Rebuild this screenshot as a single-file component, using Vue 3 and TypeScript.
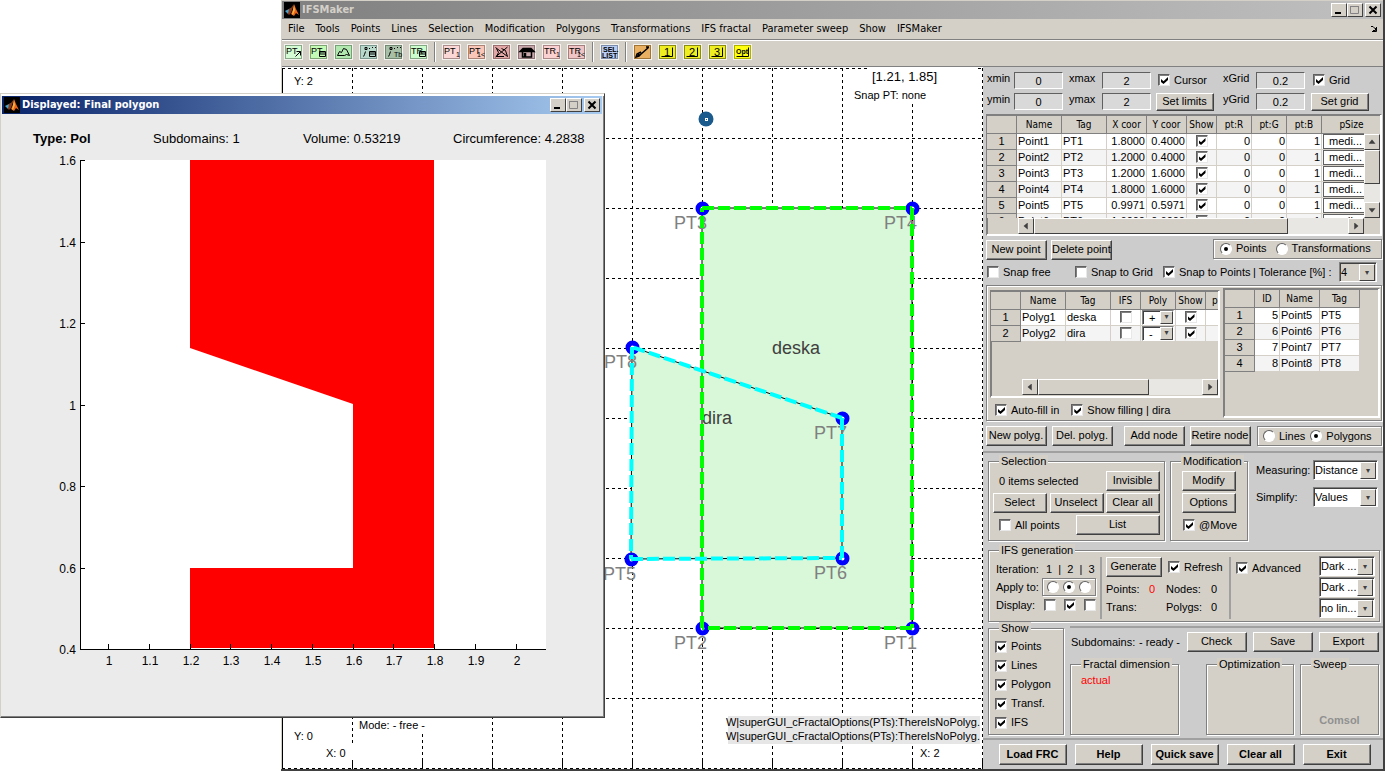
<script setup lang="ts">
import { ref } from 'vue'

interface Pt { id: number; name: string; tag: string; x: number; y: number }

const menus = ['File', 'Tools', 'Points', 'Lines', 'Selection', 'Modification', 'Polygons',
  'Transformations', 'IFS fractal', 'Parameter sweep', 'Show', 'IFSMaker']

interface Tool { id: string; title: string; bg: string; edge: string; text?: string; sub?: string; gapBefore?: boolean }
const tools: Tool[] = [
  { id: 'pt-arrow', title: 'Add point', bg: '#d5fbd5', edge: '#8aa88a', text: 'PT' },
  { id: 'pt-table', title: 'Point table', bg: '#c4fbb4', edge: '#7fa574', text: 'PT' },
  { id: 'shape', title: 'Polygon', bg: '#b0e8b0', edge: '#76a076' },
  { id: 'nodes', title: 'Node table', bg: '#b8d8cc', edge: '#7c988e' },
  { id: 'nodes-tb', title: 'Node list', bg: '#a6bfa6', edge: '#728872', sub: 'Tb' },
  { id: 'tr-table', title: 'Transformation table', bg: '#ccfccc', edge: '#84a884', text: 'TR' },
  { id: 'pt-1', title: 'Point 1', bg: '#fbd8d6', edge: '#ac8e8c', text: 'PT', sub: '1', gapBefore: true },
  { id: 'pt-1x', title: 'Point cut', bg: '#f9c6b8', edge: '#ac8478', text: 'PT', sub: '1<' },
  { id: 'shape-x', title: 'Delete polygon', bg: '#e2a6a6', edge: '#9a6e6e' },
  { id: 'house', title: 'House', bg: '#c8a8aa', edge: '#8c7274' },
  { id: 'tr-1', title: 'Transformation 1', bg: '#fbd0d0', edge: '#ac8888', text: 'TR', sub: '1' },
  { id: 'tr-1x', title: 'Transformation cut', bg: '#f0c4c4', edge: '#a48080', text: 'TR', sub: '1<' },
  { id: 'sel', title: 'Selection list', bg: '#b8ccf4', edge: '#7c8cac', gapBefore: true },
  { id: 'brush', title: 'Brush', bg: '#e8b060', edge: '#a07434', gapBefore: true },
  { id: 'n1', title: 'Set 1', bg: '#eeee20', edge: '#8c8c14', text: '1' },
  { id: 'n2', title: 'Set 2', bg: '#eeee20', edge: '#8c8c14', text: '2' },
  { id: 'n3', title: 'Set 3', bg: '#eeee20', edge: '#8c8c14', text: '3' },
  { id: 'opt', title: 'Options', bg: '#ffff10', edge: '#b0b000', text: 'Opt' },
]
const isNum = (t: Tool) => /^n\d$/.test(t.id)

const points: Pt[] = [
  { id: 1, name: 'Point1', tag: 'PT1', x: 1.8, y: 0.4 },
  { id: 2, name: 'Point2', tag: 'PT2', x: 1.2, y: 0.4 },
  { id: 3, name: 'Point3', tag: 'PT3', x: 1.2, y: 1.6 },
  { id: 4, name: 'Point4', tag: 'PT4', x: 1.8, y: 1.6 },
  { id: 5, name: 'Point5', tag: 'PT5', x: 0.9971, y: 0.5971 },
  { id: 6, name: 'Point6', tag: 'PT6', x: 1.6, y: 0.6 },
  { id: 7, name: 'Point7', tag: 'PT7', x: 1.6, y: 1.0 },
  { id: 8, name: 'Point8', tag: 'PT8', x: 1.0, y: 1.2029 },
]
const tableRows = points.slice(0, 6)
const nodeRows = points.slice(4)
const polygons = [
  { id: 1, name: 'Polyg1', tag: 'deska', sign: '+' },
  { id: 2, name: 'Polyg2', tag: 'dira', sign: '-' },
]

const SCALE = 350
const sx = (v: number) => Math.round(v * SCALE)
const sy = (v: number) => Math.round((2 - v) * SCALE)
const gridLines = Array.from({ length: 11 }, (_, i) => i * 70)
const edgePath = (ids: number[]) => ids.map((id) => {
  const p = points[id - 1]
  return `${sx(p.x)},${sy(p.y)}`
}).join(' ')
const deska = edgePath([1, 2, 3, 4])
const dira = edgePath([5, 6, 7, 8])
const segments = (ids: number[]) => ids.map((id, i) => {
  const a = points[id - 1]
  const b = points[ids[(i + 1) % ids.length] - 1]
  return { x1: sx(a.x), y1: sy(a.y), x2: sx(b.x), y2: sy(b.y) }
})
const deskaSegs = segments([1, 2, 3, 4])
const diraSegs = segments([5, 6, 7, 8])

const xTicks = Array.from({ length: 11 }, (_, i) => ({ label: String((10 + i) / 10), x: Math.round(28 + i * 40.75) }))
const yTicks = Array.from({ length: 7 }, (_, i) => ({ label: String((16 - 2 * i) / 10), y: Math.round(i * 81.5) }))

const showItems = ['Points', 'Lines', 'Polygon', 'Transf.', 'IFS']
const footer = ['Load FRC', 'Help', 'Quick save', 'Clear all', 'Exit']
const lineStyles = ['Dark ...', 'Dark ...', 'no lin...']
const mode = ref('Points')
const kind = ref('Polygons')
const apply = ref(2)
</script>

<template>
  <div class="desktop">
    <main class="window main-window">
      <header class="titlebar inactive">
        <svg class="logo" viewBox="0 0 16 16"><rect width="16" height="16" fill="#000" /><path d="M1 9l4-2 3-1-3 5-1 1z" fill="#4aa3c8" /><path d="M5 7l2-1 3-4-3 9-2 2-1-1z" fill="#8a3a1c" /><path d="M10 2l2 5 3 6-3-2-2 3-3-2 2-4z" fill="#e8641c" /><path d="M10 3l1 5-2 5-1-1z" fill="#f8b040" /></svg>
        <h1>IFSMaker</h1>
        <div class="win-buttons">
          <button aria-label="Minimize"><svg viewBox="0 0 14 12"><path d="M3 8h6v2h-6z" /></svg></button>
          <button aria-label="Maximize"><svg viewBox="0 0 14 12"><path d="M2.500 2.500h8v7h-8z" fill="none" stroke="#848284" /><path d="M2 2.500h9" stroke="#848284" /></svg></button>
          <button class="close" aria-label="Close"><svg viewBox="0 0 14 12"><path d="M3.500 2.500l7 7M10.500 2.500l-7 7" stroke="#000" stroke-width="2" /></svg></button>
        </div>
      </header>
      <nav class="menubar">
        <button v-for="m in menus" :key="m">{{ m }}</button>
        <svg class="dock" viewBox="0 0 8 8"><path d="M1 1.500h2l3 3M6.500 2v4.500h-4.500M5.500 3v2.500h-2.500" fill="none" stroke="#000" /></svg>
      </nav>
      <div class="toolbar">
        <button v-for="t in tools" :key="t.id" :class="{ divided: t.gapBefore }" :title="t.title">
          <svg viewBox="0 0 19 16">
            <rect x="0.500" y="0.500" width="18" height="15" :fill="t.bg" stroke="#f4f2ec" />
            <rect x="1.500" y="1.500" width="16" height="13" fill="none" :stroke="t.edge" />
            <text v-if="isNum(t)" x="6" y="12" class="num">{{ t.text }}</text>
            <text v-else-if="t.id === 'opt'" x="3" y="10" class="tiny">{{ t.text }}</text>
            <text v-else-if="t.text" x="2" y="10">{{ t.text }}</text>
            <text v-if="t.sub" :x="t.sub === '1' ? 14 : 10" y="13" class="sub-text">{{ t.sub }}</text>
            <g class="ink">
              <path v-if="t.id === 'pt-arrow'" d="M11.500 12.500l5-5M12.500 7.500h4v4" />
              <path v-if="t.id === 'pt-table' || t.id === 'tr-table' || t.id === 'nodes'" d="M10.500 7.500h6v5h-6zM10.500 10h6M11 8h5" />
              <path v-if="t.id === 'shape'" d="M3.500 11.500l2-4 2 1 2-4 3 1 3 6-3-1-2 1z" />
              <path v-if="t.id === 'nodes' || t.id === 'nodes-tb'" d="M4.500 12.500l1-2 1-3M6 5.500h2v-2h-2zM10 4.500h1M13 3.500h1M16 3.500h1" />
              <path v-if="t.id === 'shape-x'" d="M4.500 12.500l2-4-2-4M3.500 3.500l12 9M15.500 3l-12 10M9.500 4.500l4 2 2 6M4 12.500h8" />
              <path v-if="t.id === 'house'" d="M3 7.500l3-3h8l3 3zM5 6h10M5.500 8v5h9v-5M7.500 9v3h1v-3" stroke-width="1.500" />
              <path v-if="t.id === 'brush'" d="M15.500 3.500l-8 7M13 3l3 0M8 8l-4 2-1 3 3-1 3-3M5 12l1-2" stroke-width="1.500" />
              <path v-if="isNum(t)" d="M3.500 12.500h11v-9" />
              <path v-if="t.id === 'opt'" d="M3.500 12.500h12v-9" />
            </g>
            <template v-if="t.id === 'sel'">
              <text x="3" y="8" class="tiny">SEL.</text><text x="2" y="14" class="tiny">LIST</text>
            </template>
          </svg>
        </button>
      </div>

      <div class="body">
        <section class="canvas">
          <svg viewBox="0 -1 701 702" class="plot">
            <g class="grid">
              <line v-for="g in gridLines" :key="'v' + g" :x1="g + 0.5" :x2="g + 0.5" y1="0" y2="693" />
              <line v-for="g in gridLines" :key="'h' + g" :y1="g + 0.5" :y2="g + 0.5" x1="0" x2="700" />
            </g>
            <g class="axis">
              <line x1="0.5" x2="0.5" y1="0" y2="701" />
              <line v-for="g in gridLines" :key="'t' + g" :x1="g + 0.5" :x2="g + 0.5" y1="693" y2="701" />
            </g>
            <rect x="588" y="-1" width="106" height="18" fill="#fff" />
            <rect x="571" y="18" width="90" height="16" fill="#fff" />
            <rect x="40" y="677" width="40" height="15" fill="#fff" />
            <rect x="76" y="649" width="70" height="15" fill="#fff" />
            <polygon :points="deska" class="fill" />
            <polygon :points="dira" class="fill" />
            <g class="thin"><polygon :points="deska" /><polygon :points="dira" /></g>
            <g class="ring"><circle v-for="p in points" :key="p.id" :cx="sx(p.x) + 0.5" :cy="sy(p.y) + 0.5" r="4.500" /></g>
            <g class="labels"><text v-for="p in points" :key="p.id" :x="sx(p.x) - 28" :y="sy(p.y) + 21">{{ p.tag }}</text></g>
            <g class="area"><text x="490" y="286">deska</text><text x="420" y="356">dira</text></g>
            <g class="seg green"><line v-for="(s, i) in deskaSegs" :key="i" v-bind="s" /></g>
            <g class="seg cyan"><line v-for="(s, i) in diraSegs" :key="i" v-bind="s" /></g>
            <circle cx="424" cy="51" r="7.500" fill="#1a5a8c" />
            <rect x="423" y="50" width="3" height="3" fill="#fff" /><rect x="424" y="51" width="1" height="1" fill="#1a5a8c" />
            <g class="notes">
              <text x="12" y="17">Y: 2</text>
              <text x="12" y="672">Y: 0</text>
              <text x="44" y="689">X: 0</text>
              <text x="638" y="689">X: 2</text>
              <text x="77" y="661">Mode: - free -</text>
              <text x="590" y="13" class="coords">[1.21, 1.85]</text>
              <text x="572" y="31">Snap PT: none</text>
              <rect x="446" y="648" width="252" height="28" fill="#e6e6e6" />
              <text x="698" y="658" text-anchor="end">W|superGUI_cFractalOptions(PTs):ThereIsNoPolyg.</text>
              <text x="698" y="672" text-anchor="end">W|superGUI_cFractalOptions(PTs):ThereIsNoPolyg.</text>
            </g>
          </svg>
        </section>

        <aside class="panel">
          <div class="limits">
            <label for="xmin">xmin</label><input id="xmin" class="num-box" value="0">
            <label for="xmax">xmax</label><input id="xmax" class="num-box" value="2">
            <label class="check"><input type="checkbox" checked>Cursor</label>
            <label for="xgrid">xGrid</label><input id="xgrid" class="num-box" value="0.2">
            <label class="check"><input type="checkbox" checked>Grid</label>
            <label for="ymin">ymin</label><input id="ymin" class="num-box" value="0">
            <label for="ymax">ymax</label><input id="ymax" class="num-box" value="2">
            <button class="btn">Set limits</button>
            <label for="ygrid">yGrid</label><input id="ygrid" class="num-box" value="0.2">
            <button class="btn">Set grid</button>
          </div>

          <div class="sheet points-sheet">
            <div class="viewport">
              <table>
                <colgroup><col class="w30"><col class="w45"><col class="w45"><col class="w40"><col class="w40"><col class="w30"><col class="w35"><col class="w35"><col class="w35"><col class="w60"></colgroup>
                <thead><tr><th /><th>Name</th><th>Tag</th><th>X coor</th><th>Y coor</th><th>Show</th><th>pt:R</th><th>pt:G</th><th>pt:B</th><th>pSize</th></tr></thead>
                <tbody>
                  <tr v-for="p in tableRows" :key="p.id">
                    <th>{{ p.id }}</th><td>{{ p.name }}</td><td>{{ p.tag }}</td>
                    <td class="r">{{ p.x.toFixed(4) }}</td><td class="r">{{ p.y.toFixed(4) }}</td>
                    <td class="c"><input type="checkbox" checked :aria-label="'Show ' + p.name"></td>
                    <td class="r">0</td><td class="r">0</td><td class="r">1</td>
                    <td><select class="cell-select" :aria-label="'Size of ' + p.name"><option>medi...</option></select></td>
                  </tr>
                </tbody>
              </table>
            </div>
            <div class="vscroll"><i class="arrow up" /><i class="thumb" /><i class="arrow down" /></div>
            <div class="hscroll"><i class="arrow left" /><i class="thumb" /><i class="arrow right" /></div>
          </div>

          <div class="row points-actions">
            <button class="btn">New point</button><button class="btn">Delete point</button>
            <div class="choice" role="radiogroup">
              <label><input v-model="mode" type="radio" name="mode" value="Points">Points</label>
              <label><input v-model="mode" type="radio" name="mode" value="Transformations">Transformations</label>
            </div>
          </div>

          <div class="row snap">
            <label class="check"><input type="checkbox">Snap free</label>
            <label class="check"><input type="checkbox">Snap to Grid</label>
            <label class="check"><input type="checkbox" checked>Snap to Points</label>
            <label for="tol" class="plain">| Tolerance [%] :</label>
            <span class="combo grey"><select id="tol"><option>4</option></select></span>
          </div>

          <div class="frame polys">
            <div class="poly-left">
              <div class="sheet poly-sheet">
                <div class="viewport">
                  <table>
                    <colgroup><col class="w30"><col class="w45"><col class="w45"><col class="w30"><col class="w35"><col class="w30"><col class="w30"></colgroup>
                    <thead><tr><th /><th>Name</th><th>Tag</th><th>IFS</th><th>Poly</th><th>Show</th><th class="cut">p</th></tr></thead>
                    <tbody>
                      <tr v-for="p in polygons" :key="p.id">
                        <th>{{ p.id }}</th><td>{{ p.name }}</td><td>{{ p.tag }}</td>
                        <td class="c"><input type="checkbox" :aria-label="'IFS ' + p.name"></td>
                        <td><span class="combo mini"><select :aria-label="'Sign of ' + p.name"><option>{{ p.sign }}</option></select></span></td>
                        <td class="c"><input type="checkbox" checked :aria-label="'Show ' + p.name"></td><td />
                      </tr>
                    </tbody>
                  </table>
                </div>
                <div class="hscroll"><i class="arrow left" /><i class="thumb" /><i class="arrow right" /></div>
              </div>
              <div class="row fill-opts">
                <label class="check"><input type="checkbox" checked>Auto-fill in</label>
                <label class="check"><input type="checkbox" checked>Show filling | dira</label>
              </div>
            </div>
            <div class="sheet node-sheet">
              <table>
                <colgroup><col class="w30"><col class="w25"><col class="w40"><col class="w40"></colgroup>
                <thead><tr><th /><th>ID</th><th>Name</th><th>Tag</th></tr></thead>
                <tbody>
                  <tr v-for="(p, i) in nodeRows" :key="p.id"><th>{{ i + 1 }}</th><td class="r">{{ p.id }}</td><td>{{ p.name }}</td><td>{{ p.tag }}</td></tr>
                </tbody>
              </table>
            </div>
          </div>

          <div class="row poly-actions">
            <button class="btn">New polyg.</button><button class="btn">Del. polyg.</button>
            <button class="btn add">Add node</button><button class="btn">Retire node</button>
            <div class="choice" role="radiogroup">
              <label><input v-model="kind" type="radio" name="kind" value="Lines">Lines</label>
              <label><input v-model="kind" type="radio" name="kind" value="Polygons">Polygons</label>
            </div>
          </div>

          <hr>

          <div class="row selection-row">
            <fieldset class="selection"><legend>Selection</legend>
              <div class="line"><span class="note">0 items selected</span><button class="btn">Invisible</button></div>
              <div class="line"><button class="btn">Select</button><button class="btn">Unselect</button><button class="btn">Clear all</button></div>
              <div class="line"><label class="check"><input type="checkbox">All points</label><button class="btn list">List</button></div>
            </fieldset>
            <fieldset class="modification"><legend>Modification</legend>
              <button class="btn">Modify</button><button class="btn">Options</button>
              <label class="check"><input type="checkbox" checked>@Move</label>
            </fieldset>
            <div class="measure">
              <label for="meas">Measuring:</label><span class="combo"><select id="meas"><option>Distance</option></select></span>
              <label for="simp">Simplify:</label><span class="combo"><select id="simp"><option>Values</option></select></span>
            </div>
          </div>

          <fieldset class="ifs"><legend>IFS generation</legend>
            <div class="ifs-body">
              <div class="iter">
                <span>Iteration:</span><span class="nums">1&nbsp; |&nbsp; 2&nbsp; |&nbsp; 3</span>
                <span>Apply to:</span>
                <span class="choice trio"><input v-for="n in 3" :key="n" v-model="apply" type="radio" name="apply" :value="n" :aria-label="'Apply to ' + n"></span>
                <span>Display:</span>
                <span class="trio"><input v-for="n in 3" :key="n" type="checkbox" :checked="n === 2" :aria-label="'Display ' + n"></span>
              </div>
              <div class="gen">
                <div class="line"><button class="btn">Generate</button><label class="check"><input type="checkbox" checked>Refresh</label></div>
                <div class="stats"><span>Points:</span><b>0</b><span>Nodes:</span><span>0</span><span>Trans:</span><span /><span>Polygs:</span><span>0</span></div>
              </div>
              <div class="adv">
                <label class="check"><input type="checkbox" checked>Advanced</label>
                <div class="styles"><span v-for="(s, i) in lineStyles" :key="i" class="combo"><select :aria-label="'Line style ' + (i + 1)"><option>{{ s }}</option></select></span></div>
              </div>
            </div>
          </fieldset>

          <div class="row lower">
            <fieldset class="show"><legend>Show</legend>
              <label v-for="s in showItems" :key="s" class="check"><input type="checkbox" checked>{{ s }}</label>
            </fieldset>
            <div class="results">
              <hr>
              <div class="line sub"><span>Subdomains:</span><span>- ready -</span><button class="btn">Check</button><button class="btn">Save</button><button class="btn">Export</button></div>
              <div class="line boxes">
                <fieldset class="fractal"><legend>Fractal dimension</legend><p>actual</p></fieldset>
                <fieldset class="optim"><legend>Optimization</legend></fieldset>
                <fieldset class="sweep"><legend>Sweep</legend><strong>Comsol</strong></fieldset>
              </div>
            </div>
          </div>

          <hr class="last">
          <div class="footer"><button v-for="f in footer" :key="f" class="btn">{{ f }}</button></div>
        </aside>
      </div>
    </main>

    <section class="window figure">
      <header class="titlebar active">
        <svg class="logo" viewBox="0 0 16 16"><rect width="16" height="16" fill="#000" /><path d="M1 9l4-2 3-1-3 5-1 1z" fill="#4aa3c8" /><path d="M5 7l2-1 3-4-3 9-2 2-1-1z" fill="#8a3a1c" /><path d="M10 2l2 5 3 6-3-2-2 3-3-2 2-4z" fill="#e8641c" /><path d="M10 3l1 5-2 5-1-1z" fill="#f8b040" /></svg>
        <h2>Displayed: Final polygon</h2>
        <div class="win-buttons">
          <button aria-label="Minimize"><svg viewBox="0 0 14 12"><path d="M3 8h6v2h-6z" /></svg></button>
          <button aria-label="Maximize"><svg viewBox="0 0 14 12"><path d="M2.500 2.500h8v7h-8z" fill="none" stroke="#848284" /><path d="M2 2.500h9" stroke="#848284" /></svg></button>
          <button class="close" aria-label="Close"><svg viewBox="0 0 14 12"><path d="M3.500 2.500l7 7M10.500 2.500l-7 7" stroke="#000" stroke-width="2" /></svg></button>
        </div>
      </header>
      <div class="facts"><strong>Type: Pol</strong><span>Subdomains: 1</span><span>Volume: 0.53219</span><span>Circumference: 4.2838</span></div>
      <svg class="chart" viewBox="-40 -8 520 528">
        <rect width="466" height="489" fill="#fff" />
        <path d="M110 0h244v488H110v-80h163v-164l-163-56z" fill="#f00" />
        <path d="M0.500 0v489.500H466" fill="none" stroke="#000" />
        <g stroke="#000">
          <line v-for="t in xTicks" :key="t.label" :x1="t.x + 0.5" :x2="t.x + 0.5" y1="484" y2="489" />
          <line v-for="t in yTicks" :key="t.label" :y1="t.y + 0.5" :y2="t.y + 0.5" x1="0" x2="5" />
        </g>
        <text v-for="t in xTicks" :key="'x' + t.label" :x="t.x + 1" y="505" text-anchor="middle">{{ t.label }}</text>
        <text v-for="t in yTicks" :key="'y' + t.label" x="-4" :y="t.y + 5" text-anchor="end">{{ t.label }}</text>
      </svg>
    </section>
  </div>
</template>

<style>
body { background: #fff; }
</style>

<style scoped>
* { box-sizing: border-box; }
.desktop { position: relative; min-height: 100vh; overflow: hidden; font: 11px/13px "Liberation Sans", Arial, sans-serif; color: #000; }
button, input, select { font: inherit; color: inherit; margin: 0; padding: 0; border-radius: 0; }
.window { position: absolute; display: flex; flex-direction: column; }
.main-window { top: 0; right: 0; bottom: 0; left: 281px; padding: 1px 0 0 1px; background: #d4d0c8; border-right: 2px solid #404040; border-bottom: 2px solid #404040; }
.titlebar { display: flex; align-items: center; height: 18px; padding: 0 2px; gap: 2px; flex: none; }
.titlebar h1, .titlebar h2 { margin: 0; font: bold 11px/16px "DejaVu Sans Condensed", Tahoma, sans-serif; flex: 1; }
.inactive { background: linear-gradient(90deg, #808080, #c0c0c0); color: #d4d0c8; }
.active { background: linear-gradient(90deg, #0a246a, #a6caf0); color: #fff; }
.logo { width: 16px; height: 16px; }
.win-buttons { display: flex; }
.win-buttons button { display: flex; width: 16px; height: 14px; background: #d4d0c8; border: 1px solid; border-color: #fff #404040 #404040 #fff; }
.win-buttons svg { width: 14px; height: 12px; }
.win-buttons .close { margin-left: 2px; }
.menubar { display: flex; align-items: center; gap: 11px; height: 20px; padding: 0 5px 0 6px; flex: none; }
.menubar button { border: 0; background: none; font: 11px/16px "DejaVu Sans Condensed", Tahoma, sans-serif; white-space: nowrap; }
.dock { width: 8px; height: 8px; margin-left: auto; }
.toolbar { display: flex; align-items: center; gap: 6px; height: 28px; padding: 0 2px 2px; border-top: 1px solid #808080; border-bottom: 1px solid #808080; box-shadow: inset 0 1px #fff; flex: none; }
.toolbar button { display: flex; width: 19px; height: 16px; border: 0; background: none; }
.toolbar button.divided { width: 27px; height: 20px; padding: 2px 0 2px 7px; border-left: 1px solid #808080; box-shadow: inset 1px 0 #fff; }
.toolbar svg { width: 19px; height: 16px; }
.toolbar text { font: 9px "Liberation Sans", Arial, sans-serif; }
.toolbar .num { font-size: 11px; }
.toolbar .sub-text { font-size: 7px; }
.toolbar .tiny { font-size: 7px; font-weight: bold; }
.ink { fill: none; stroke: #000; }
.body { display: flex; flex: 1; min-height: 0; }
.canvas { flex: 1; min-width: 0; background: #fff; }
.plot { display: block; width: 100%; }
.plot text { font-family: "Liberation Sans", Arial, sans-serif; }
.grid line { stroke: #000; stroke-dasharray: 3 3; }
.axis line { stroke: #000; }
.fill { fill: #d9f7d9; }
.thin polygon { fill: none; stroke: #000; }
.ring circle { fill: #fff; stroke: #00f; stroke-width: 5; }
.labels text { font-size: 18px; fill: #808080; }
.area text { font-size: 18px; fill: #404040; }
.seg line { stroke-width: 4; stroke-dasharray: 12 4; }
.green line { stroke: #0f0; }
.cyan line { stroke: #0ff; }
.notes text { font-size: 11px; }
.notes .coords { font-size: 13px; }

.panel { width: 400px; flex: none; background: #ccc; padding: 5px 1px 0 3px; display: flex; flex-direction: column; }
.btn { height: 20px; padding: 0 1px 1px 0; border: 1px solid; border-color: #fff #404040 #404040 #fff; box-shadow: inset -1px -1px #808080; background: #d4d0c8; text-align: center; white-space: nowrap; flex: none; }
.row, .line { display: flex; }
input[type="checkbox"] { appearance: none; display: inline-grid; flex: none; width: 12px; height: 12px; background: #fff; border: 1px solid; border-color: #606060 #e8e8e8 #e8e8e8 #606060; box-shadow: inset 1px 1px #808080; }
input[type="checkbox"]:checked::before { content: ""; width: 7px; height: 7px; margin: 2px; background: #000; clip-path: polygon(0 28%, 36% 60%, 100% 0, 100% 42%, 36% 100%, 0 70%); }
input[type="radio"] { appearance: none; display: grid; place-content: center; flex: none; width: 12px; height: 12px; background: #fff; border: 1px solid; border-color: #606060 #fff #fff #606060; border-radius: 50%; }
input[type="radio"]:checked::before { content: ""; width: 4px; height: 4px; border-radius: 50%; background: #000; }
.check { display: flex; align-items: center; gap: 4px; white-space: nowrap; }
.choice { display: flex; align-items: center; border: 1px solid #808080; box-shadow: inset 1px 1px #fff, 1px 1px #fff; background: #d4d0c8; }
.choice label { display: flex; align-items: center; gap: 4px; }
.combo { display: grid; height: 20px; background: #fff; border: 1px solid; border-color: #808080 #fff #fff #808080; box-shadow: inset 1px 1px #404040; }
.combo select { grid-area: 1 / 1; appearance: none; border: 0; background: none; padding-left: 1px; width: 100%; min-width: 0; }
.combo::after { content: "▾"; grid-area: 1 / 1; justify-self: end; width: 14px; margin: 1px; background: #d4d0c8; border: 1px solid; border-color: #fff #404040 #404040 #fff; pointer-events: none; color: #404040; font: 8px/15px "DejaVu Sans", sans-serif; text-align: center; }
.grey { background: #d4d0c8; }
hr { height: 2px; margin: 5px -1px 0 -3px; border: 0; background: #a0a0a0; flex: none; }

.limits { display: grid; grid-template-columns: 27px 55px 33px 54px 67px 33px 55px 58px; grid-template-rows: 18px 18px; row-gap: 3px; padding-left: 1px; }
.limits > label { line-height: 13px; }
.limits .check { padding: 0 0 2px 2px; }
.limits .btn { width: 58px; height: 18px; }
.num-box { width: 49px; height: 17px; border: 1px solid; border-color: #606060 #fff #fff #606060; background: #d9d9d9; text-align: center; }

.sheet { background: #d4d0c8; border: 1px solid; border-color: #808080 #fff #fff #808080; box-shadow: inset -1px -1px #fff, inset 1px 1px #808080; overflow: hidden; }
table { border-collapse: separate; border-spacing: 0; table-layout: fixed; width: 0; }
th, td { height: 16px; padding: 0 1px; font-weight: normal; line-height: 15px; border-right: 1px solid #d4d0c8; border-bottom: 1px solid #d4d0c8; white-space: nowrap; overflow: hidden; }
th { border-color: #808080; background: #d4d0c8; text-align: center; }
thead th { height: 18px; padding: 0; line-height: 17px; font-family: "DejaVu Sans Condensed", Tahoma, sans-serif; font-size: 10px; }
td { background: #fff; }
tr:nth-child(even) td { background: #f4f4f4; }
.r { text-align: right; }
.c { text-align: center; }
.c input { vertical-align: top; margin-top: 1px; }
thead .cut { text-align: left; padding-left: 6px; }
.w25 { width: 25px; } .w30 { width: 30px; } .w35 { width: 35px; } .w40 { width: 40px; } .w45 { width: 45px; } .w60 { width: 60px; }
.points-sheet { display: grid; grid-template-columns: minmax(0, 1fr) 16px; grid-template-rows: 102px 16px; height: 122px; margin-top: 3px; padding: 1px 1px 1px 0; flex: none; }
.viewport { overflow: hidden; }
.cell-select { appearance: none; display: block; width: 56px; height: 15px; border: 1px solid #606060; background: #fff; padding-left: 5px; line-height: 13px; }
.vscroll { display: flex; flex-direction: column; margin-top: 18px; background: #e9e7e3; }
.hscroll { display: flex; margin-left: 31px; background: #e9e7e3; }
.arrow, .thumb { display: grid; place-content: center; background: #d4d0c8; border: 1px solid; border-color: #fff #404040 #404040 #fff; flex: none; }
.arrow { width: 16px; height: 16px; }
.arrow::before { content: ""; width: 7px; height: 7px; background: #404040; }
.up::before { clip-path: polygon(0 75%, 50% 15%, 100% 75%); }
.down { margin-top: auto; }
.down::before { clip-path: polygon(0 25%, 50% 85%, 100% 25%); }
.left::before { clip-path: polygon(75% 0, 15% 50%, 75% 100%); }
.right { margin-left: auto; }
.right::before { clip-path: polygon(25% 0, 85% 50%, 25% 100%); }
.vscroll .thumb { height: 34px; }
.points-sheet .hscroll .thumb { width: 254px; }

.points-actions { height: 23px; margin-top: 2px; gap: 4px; align-items: center; }
.points-actions .btn, .poly-actions .btn { width: 61px; }
.points-actions .choice { width: 169px; height: 20px; margin: 0 0 2px auto; padding-left: 6px; gap: 9px; }
.snap { height: 22px; align-items: center; padding-left: 1px; }
.snap .check:nth-child(1) { width: 88px; }
.snap .check:nth-child(2) { width: 88px; }
.snap .check:nth-child(3) { width: 90px; }
.snap .combo { width: 38px; margin-left: auto; margin-right: 5px; }
.frame { border: 1px solid #808080; box-shadow: inset 1px 1px #fff, 1px 1px #fff; background: #d4d0c8; }
.polys { display: flex; height: 136px; margin-top: 2px; padding: 2px 1px 2px 3px; flex: none; justify-content: space-between; }
.poly-sheet { display: grid; grid-template-rows: 87px 16px; width: 230px; height: 108px; margin-top: 2px; padding: 1px 1px 1px 0; }
.poly-sheet .thumb { width: 111px; }
.fill-opts { height: 24px; align-items: center; padding-left: 5px; gap: 12px; }
.node-sheet { width: 157px; padding: 1px; }
.mini { height: 15px; width: 32px; }
.mini select { padding-left: 6px; line-height: 12px; }
.mini::after { width: 11px; margin: 0; line-height: 10px; }
.poly-actions { height: 20px; margin-top: 5px; gap: 5px; }
.poly-actions .add { margin-left: 6px; }
.poly-actions .choice { width: 125px; margin-left: auto; padding-left: 5px; gap: 5px; }

fieldset { min-width: 0; margin: 0; padding: 3px 4px 0; border: 1px solid #808080; box-shadow: inset 1px 1px #fff, 1px 1px #fff; background: #d4d0c8; }
legend { margin-left: 6px; padding: 0 2px; line-height: 13px; background: #d4d0c8; }
.selection-row { height: 86px; margin-top: 2px; padding-left: 2px; gap: 5px; flex: none; }
.selection { width: 177px; }
.selection .line { gap: 2px; margin-bottom: 2px; align-items: center; justify-content: space-between; }
.selection .btn { width: 54px; }
.selection .line .list { width: 84px; }
.selection .note, .selection .check { margin-left: 6px; }
.modification { width: 78px; }
.modification .btn { display: block; width: 54px; margin: 0 auto 2px; }
.modification .check { height: 20px; padding-left: 8px; }
.measure { display: grid; grid-template-columns: 57px 65px; grid-template-rows: 20px 20px; row-gap: 7px; padding: 5px 0 0 3px; align-items: center; }

.ifs { height: 78px; margin: 3px 2px 0; padding: 0 4px; flex: none; }
.ifs-body { display: flex; height: 62px; }
.iter { display: grid; grid-template-columns: 46px 55px; grid-template-rows: 18px 18px 18px; padding: 3px 0 0 3px; align-items: center; width: 109px; border-right: 2px solid #a0a0a0; }
.nums { padding-left: 4px; }
.trio { display: flex; height: 18px; align-items: center; gap: 8px; padding: 0 2px; }
.trio.choice { gap: 4px; padding: 0 4px; width: 54px; }
.gen { width: 129px; padding-left: 4px; border-right: 2px solid #a0a0a0; }
.gen .btn { width: 56px; }
.gen .line { gap: 6px; }
.stats { display: grid; grid-template-columns: 43px 17px 45px 12px; line-height: 18px; padding-top: 3px; }
.stats b { font-weight: normal; color: #f00; }
.adv { display: flex; flex: 1; justify-content: space-between; padding-left: 5px; }
.adv .check { height: 22px; }
.styles { display: grid; gap: 1px; width: 56px; margin-top: -1px; align-content: start; }

.lower { height: 113px; padding-left: 2px; gap: 6px; flex: none; }
.show { width: 76px; padding: 2px 6px 0; }
.show .check { height: 19px; }
.show legend { margin-left: 4px; }
.results { flex: 1; display: flex; flex-direction: column; min-width: 0; }
.results hr { margin: 4px -1px 0 0; }
.sub { height: 20px; margin-top: 4px; align-items: center; }
.sub span { width: 68px; padding-left: 1px; white-space: nowrap; flex: none; }
.sub span + span { width: 49px; }
.sub .btn { width: 60px; margin-right: 6px; }
.boxes { flex: 1; margin-top: 6px; }
.fractal { width: 109px; margin-right: 27px; }
.fractal p { margin: 0 0 0 6px; color: #f00; }
.optim { width: 88px; margin-right: 6px; }
.sweep { width: 79px; }
.sweep strong { display: block; margin-top: 40px; color: #909090; text-align: center; }
.last { margin-top: 3px; }
.footer { display: flex; gap: 8px; padding: 4px 0 0 13px; }
.footer .btn { width: 68px; height: 21px; font-weight: bold; }

.figure { top: 93px; left: 0; width: 605px; height: 625px; padding: 2px 1px 0; background: #ebebeb; border: 1px solid; border-color: #d4d0c8 #404040 #404040 #d4d0c8; box-shadow: inset 0 2px #fff, inset -1px -1px #808080; }
.figure .titlebar { margin-right: 1px; }
.facts { display: grid; grid-template-columns: 120px 150px 150px auto; padding: 17px 0 0 31px; font-size: 13px; line-height: 16px; }
.chart { display: block; width: 520px; margin: 5px 0 0 38px; }
.chart text { font: 12px "Liberation Sans", Arial, sans-serif; }
</style>
